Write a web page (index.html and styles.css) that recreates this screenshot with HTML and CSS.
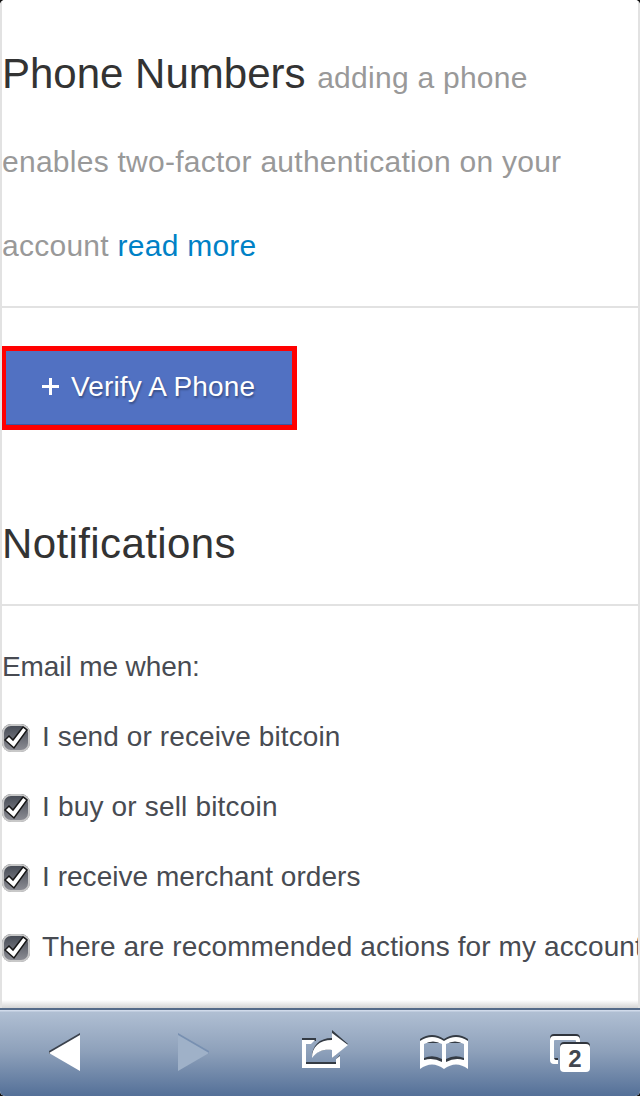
FILE: index.html
```html
<!DOCTYPE html>
<html lang="en">

<head>
    <meta charset="utf-8">
    <title>Phone Numbers</title>
    <link rel="stylesheet" href="styles.css">
</head>

<body>
    <div class="screen">
        <div class="page">
            <h2 class="phone-title">Phone Numbers <small>adding a phone<br>enables two-factor authentication on your<br>account <a href="#">read more</a></small></h2>

            <button class="verify-button"><span class="plus"></span>Verify A Phone</button>

            <h2 class="notify-title">Notifications</h2>

            <p class="intro">Email me when:</p>
            <label class="option"><input type="checkbox" checked><span class="check"><svg viewBox="0 0 26 26"><path d="M2 15l4-4 4 4L20 2l4 3L11 23z"/></svg></span><span>I send or receive bitcoin</span></label>
            <label class="option sell"><input type="checkbox" checked><span class="check"><svg viewBox="0 0 26 26"><path d="M2 15l4-4 4 4L20 2l4 3L11 23z"/></svg></span><span>I buy or sell bitcoin</span></label>
            <label class="option orders"><input type="checkbox" checked><span class="check"><svg viewBox="0 0 26 26"><path d="M2 15l4-4 4 4L20 2l4 3L11 23z"/></svg></span><span>I receive merchant orders</span></label>
            <label class="option"><input type="checkbox" checked><span class="check"><svg viewBox="0 0 26 26"><path d="M2 15l4-4 4 4L20 2l4 3L11 23z"/></svg></span><span>There are recommended actions for my account</span></label>
        </div>

        <div class="toolbar">
            <svg class="back" width="32" height="40" viewBox="0 0 32 40">
                <path fill="#3b424d" d="M0 18L31 0v4L0 21z"/>
                <path fill="#fff" d="M0 20L31 2v36z"/>
            </svg>
            <svg class="forward" width="32" height="40" viewBox="0 0 32 40">
                <path fill="#7890b1" d="M0 0l31 18v3L0 4z"/>
                <path fill="#9fb1c8" d="M0 2l31 18L0 38z"/>
            </svg>
            <svg class="share" width="48" height="40" viewBox="0 0 48 40">
                <path fill="#343b44" d="M0 8h14v3H0zM4 32h30v3H4zM34 29l4-4v3l-4 4z"/>
                <path fill="#fff" d="M0 10h13l-4 4H4v20h30v-5l4-3v12H0z"/>
                <path fill="#343b44" d="M30 0l16 14-16 14v-8c-8-1-15 1-20 7C10 16 17 8 30 8z"/>
                <path fill="#fff" d="M30 3l16 12-16 13v-8c-8-1-15 1-20 8C10 17 17 10 30 10z"/>
            </svg>
            <svg class="book" width="48" height="36" viewBox="0 0 48 36">
                <path fill="#343b44" d="M0 4Q12-4 24 4 36-4 48 4v4H0z"/>
                <path fill="#fff" fill-rule="evenodd" d="M0 6Q12-2 24 6 36-2 48 6v28Q36 25 24 34 12 25 0 34zM4 9v16q9-4 18 0V9Q13 4 4 9zm22 0v16q9-4 18 0V9q-9-5-18 0z"/>
                <path fill="#343b44" d="M4 23q9-4 18 1v3q-9-5-18-2zM26 24q9-5 18-1v2q-9-3-18 2z"/>
            </svg>
            <div class="tabs">
                <svg width="40" height="38" viewBox="0 0 40 38">
                    <path fill="#2f343c" d="M4 0h22q4 0 4 4v4h-4V6H4v2H0V4q0-4 4-4zM4 24h4v2H4z"/>
                    <path fill="#fff" fill-rule="evenodd" d="M4 2h22q4 0 4 4v2h-4V7q0-1-1-1H5Q4 6 4 7v16q0 3 2 3h2v4H4q-4 0-4-4V6q0-4 4-4z"/>
                    <rect fill="#2f343c" x="10" y="8" width="30" height="20" rx="4"/>
                    <rect fill="#fff" x="10" y="10" width="30" height="28" rx="4"/>
                </svg>
                <span class="count">2</span>
            </div>
        </div>
    </div>
</body>

</html>
```
FILE: styles.css
```css
body {
    margin: 0;
    background: #111;
    font-family: "Liberation Sans", Arial, sans-serif;
}

.screen {
    display: flex;
    flex-direction: column;
    height: 1096px;
    border-radius: 5px;
    overflow: hidden;
    background: #fff;
}

.page {
    box-sizing: border-box;
    height: 1008px;
    padding-top: 32px;
    border-left: 2px solid #e2e2e2;
    border-right: 2px solid #e2e2e2;
    overflow: hidden;
    white-space: nowrap;
    background: linear-gradient(#fff 1000px, #d4d4d4 1008px);
}

h2 {
    margin: 0;
    border-bottom: 2px solid #e2e2e2;
    font-size: 42px;
    font-weight: normal;
    line-height: 84px;
    color: #333;
}

.phone-title {
    height: 274px;
}

.phone-title small {
    font-size: 30px;
    line-height: 1;
    letter-spacing: 0.26px;
    color: #999;
}

a {
    color: #0081c6;
    text-decoration: none;
}

.verify-button {
    position: relative;
    left: -1px;
    display: flex;
    align-items: center;
    box-sizing: border-box;
    width: 296px;
    height: 84px;
    margin: 38px 0 0;
    padding: 0 0 2px 36px;
    border: 5px solid #f00;
    background: #5171c2;
    box-shadow: inset 0 -1px #3c56a0;
    font-family: inherit;
    font-size: 28px;
    letter-spacing: 0.15px;
    color: #fff;
    text-shadow: 1px 2px 2px rgba(0, 0, 0, .3);
}

.plus {
    width: 17px;
    height: 17px;
    margin: -2px 12px 0 0;
    background: linear-gradient(#fff, #fff) center / 17px 3px no-repeat,
        linear-gradient(#fff, #fff) center / 3px 17px no-repeat;
}

.notify-title {
    margin-top: 72px;
    height: 102px;
    letter-spacing: 0.4px;
}

.intro {
    margin: 26px 0 0;
    font-size: 28px;
    line-height: 70px;
    letter-spacing: -0.1px;
    color: #484b52;
}

.option {
    display: flex;
    align-items: center;
    height: 70px;
    font-size: 28px;
    letter-spacing: 0.11px;
    color: #484b52;
}

.sell {
    letter-spacing: 0.18px;
}

.orders {
    letter-spacing: 0.04px;
}

.option input {
    display: none;
}

.check {
    flex: none;
    box-sizing: border-box;
    width: 28px;
    height: 28px;
    margin: 2px 12px 0 0;
    padding: 1px;
    border-radius: 9px;
    background: linear-gradient(#424751, #909198);
    box-shadow: inset 0 0 0 2px #c8c8c8;
}

.check svg {
    display: block;
    width: 26px;
    height: 26px;
    fill: #fff;
    stroke: #161616;
    stroke-width: 1.5;
}

.toolbar {
    display: flex;
    box-sizing: border-box;
    height: 88px;
    padding: 23px 0 0 49px;
    border-top: 2px solid #556b89;
    background: linear-gradient(#d0daea 1px, #b0bfd3 2px, #8da0ba 42px, #547098);
}

.toolbar svg {
    flex: none;
}

.forward {
    margin-left: 97px;
}

.share {
    margin: -3px 0 0 92px;
}

.book {
    margin: 2px 0 0 70px;
}

.tabs {
    position: relative;
    margin: 1px 0 0 82px;
}

.count {
    position: absolute;
    left: 10px;
    top: 10px;
    width: 30px;
    text-align: center;
    font-size: 24px;
    line-height: 29px;
    font-weight: bold;
    color: #424750;
}
```
